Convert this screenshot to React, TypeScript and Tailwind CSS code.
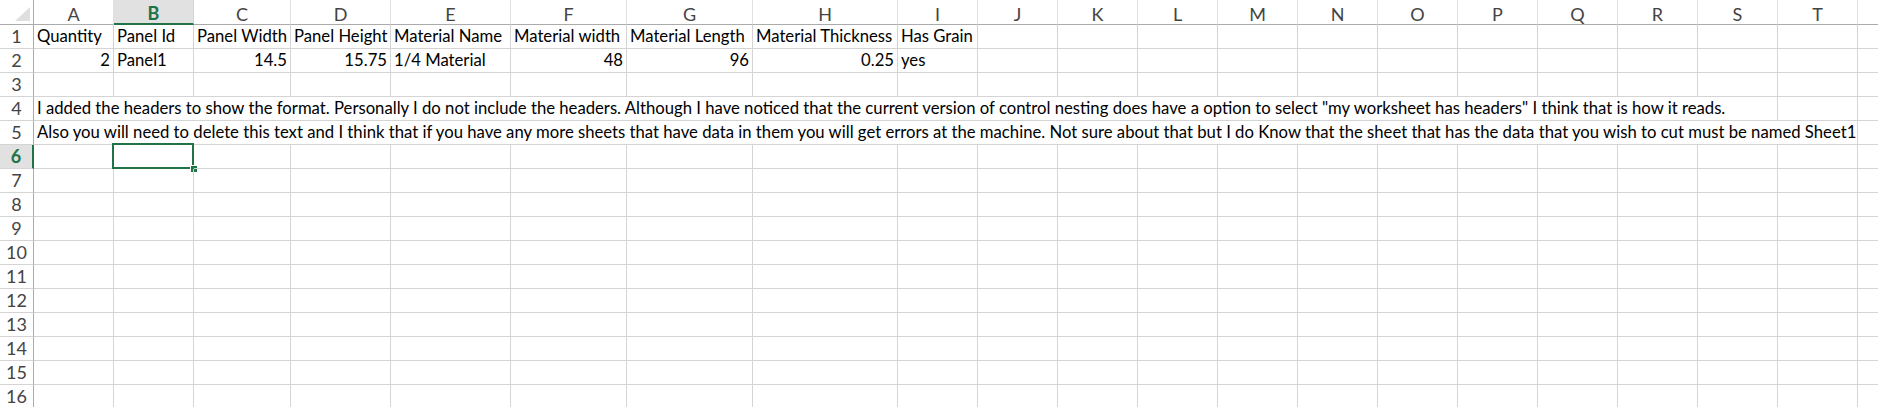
import React from "react";

const COLS = ["A","B","C","D","E","F","G","H","I","J","K","L","M","N","O","P","Q","R","S","T","U"];

type Cell = { text?: string; right?: boolean; span?: number };

const rows: Record<number, Cell[]> = {
  1: [
    { text: "Quantity" }, { text: "Panel Id" }, { text: "Panel Width" }, { text: "Panel Height" },
    { text: "Material Name" }, { text: "Material width" }, { text: "Material Length" },
    { text: "Material Thickness" }, { text: "Has Grain" },
  ],
  2: [
    { text: "2", right: true }, { text: "Panel1" }, { text: "14.5", right: true }, { text: "15.75", right: true },
    { text: "1/4 Material" }, { text: "48", right: true }, { text: "96", right: true },
    { text: "0.25", right: true }, { text: "yes" },
  ],
  4: [
    {
      text: 'I added the headers to show the format. Personally I do not include the headers. Although I have noticed that the current version of control nesting does have a option to select "my worksheet has headers" I think that is how it reads.',
      span: 19,
    },
  ],
  5: [
    {
      text: "Also you will need to delete this text and I think that if you have any more sheets that have data in them you will get errors at the machine. Not sure about that but I do Know that the sheet that has the data that you wish to cut must be named Sheet1",
      span: 20,
    },
  ],
};

function buildRow(r: number): Cell[] {
  const given = rows[r] || [];
  const out: Cell[] = [...given];
  let used = given.reduce((s, c) => s + (c.span || 1), 0);
  while (used < COLS.length) {
    out.push({});
    used++;
  }
  return out;
}

const spanClass: Record<number, string> = {
  1: "",
  19: "col-span-19",
  20: "col-span-20",
};

export default function App() {
  const rowNums = Array.from({ length: 16 }, (_, i) => i + 1);
  return (
    <div
      className="w-[1878px] h-[407px] overflow-hidden bg-white text-[16.7px] text-black"
      style={{ fontFamily: "Lato, 'Open Sans', sans-serif" }}
    >
      <div className="grid grid-cols-[34px_80px_80px_97px_100px_120px_116px_126px_145px_repeat(12,80px)_80px] grid-rows-[25px_repeat(16,24px)]">
        {/* corner */}
        <div className="relative border-r border-b border-r-[#ababab] border-b-[#ababab] bg-white">
          <svg className="absolute left-0 top-0" width="33" height="24" viewBox="0 0 33 24">
            <polygon points="30,7 30,21 15,21" fill="#dfdfdf" />
          </svg>
        </div>
        {/* column headers */}
        {COLS.map((c) =>
          c === "B" ? (
            <div
              key={c}
              className="flex items-center justify-center border-r border-r-[#d4d4d4] border-b-2 border-b-[#217346] bg-[#e1e1e1] pt-[2px] font-bold text-[#217346] text-[18px] leading-none"
            >
              {c}
            </div>
          ) : (
            <div
              key={c}
              className="flex items-center justify-center border-r border-b border-r-[#e1e1e1] border-b-[#ababab] bg-white pt-[3px] text-[#444444] text-[18px] leading-none"
            >
              {c === "U" ? "" : c}
            </div>
          )
        )}
        {rowNums.map((r) => {
          const cells = buildRow(r);
          const selectedRow = r === 6;
          return (
            <React.Fragment key={r}>
              {selectedRow ? (
                <div className="flex items-end justify-center border-b border-b-[#d4d4d4] border-r-2 border-r-[#217346] bg-[#e1e1e1] pb-[2px] font-bold text-[#217346] text-[18px] leading-[19px]">
                  {r}
                </div>
              ) : (
                <div className="flex items-end justify-center border-b border-b-[#d4d4d4] border-r border-r-[#ababab] bg-white pb-[2px] text-[#444444] text-[18px] leading-[19px]">
                  {r}
                </div>
              )}
              {cells.map((cell, i) => {
                const isSel = r === 6 && i === 1;
                return (
                  <div
                    key={i}
                    className={`relative flex items-end border-r border-b border-[#d4d4d4] pb-[2px] leading-[19px] ${
                      cell.right ? "justify-end pr-[3px]" : "pl-[3px]"
                    } ${spanClass[cell.span || 1]}`}
                  >
                    {cell.text ? <span className="whitespace-nowrap">{cell.text}</span> : null}
                    {isSel ? (
                      <>
                        <div className="pointer-events-none absolute -left-[2px] -top-[2px] h-[26px] w-[82px] border-2 border-[#217346]" />
                        <div className="pointer-events-none absolute -right-[5px] -bottom-[5px] h-[8px] w-[8px] border border-white bg-[#217346]" />
                      </>
                    ) : null}
                  </div>
                );
              })}
            </React.Fragment>
          );
        })}
      </div>
    </div>
  );
}
